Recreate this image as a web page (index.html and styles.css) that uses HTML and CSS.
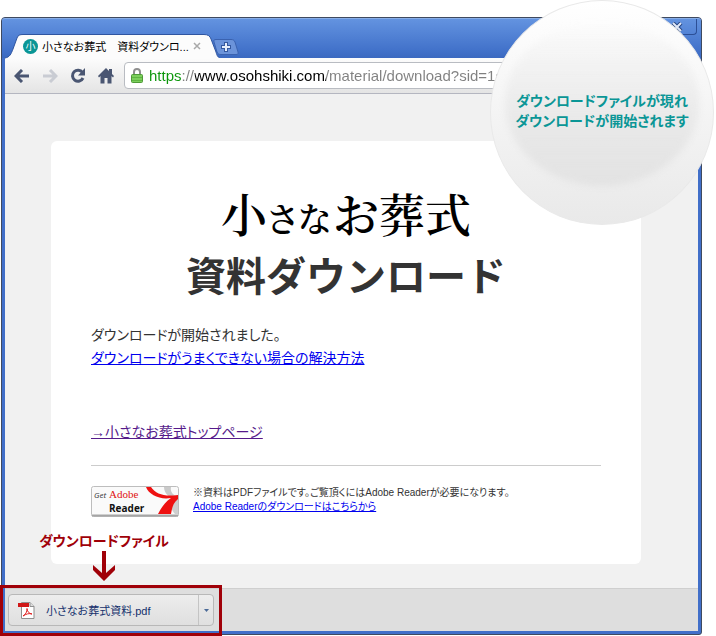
FILE: index.html
```
<!DOCTYPE html>
<html lang="ja">
<head>
    <meta charset="UTF-8">
    <meta name="viewport" content="width=device-width, initial-scale=1.0">
    <title>小さなお葬式 資料ダウンロード</title>
    <link rel="stylesheet" href="styles.css">
</head>
<body>
    <div class="window">
        <div class="titlebar">
            <div class="tab">
                <svg class="tab-bg" width="214" height="25" viewBox="0 0 214 25">
                    <path d="M0 25V24C5 23 6 20 8 15L12 4C13 1 15 .5 18 .5H199C203 .5 205 2 206 5L211 18C212 22 213 23 214 23.500V25Z" fill="#fcfcfc"/>
                    <path d="M0 24C5 23 6 20 8 15L12 4C13 1 15 .5 18 .5H199C203 .5 205 2 206 5L211 18C212 22 213 23 214 23.500" fill="none" stroke="#2f55a0"/>
                </svg>
                <span class="favicon">小</span>
                <span class="tab-title">小さなお葬式　資料ダウンロ...</span>
                <button class="tab-close" aria-label="タブを閉じる">
                    <svg width="8" height="8" viewBox="0 0 8 8"><path d="M1 1L7 7M7 1L1 7" stroke="#a9a9a9" stroke-width="1.500"/></svg>
                </button>
            </div>
            <button class="new-tab" aria-label="新しいタブ">
                <svg width="26" height="16" viewBox="0 0 26 16">
                    <path d="M3 .5H18C20 .5 21 1 22 3L25 13C25.500 15 25 15.500 23 15.500H8C6 15.500 5 15 4 13L1 3C.5 1 1 .5 3 .5Z" fill="#6b93da" stroke="#3a62b0"/>
                    <path d="M13 3V13M8 8H18" stroke="#34589f" stroke-width="4"/>
                    <path d="M13 4V12M9 8H17" stroke="#e6eefb" stroke-width="2"/>
                </svg>
            </button>
            <button class="win-close" aria-label="閉じる">
                <svg width="12" height="10" viewBox="0 0 12 10">
                    <path d="M2 1L10 9M10 1L2 9" stroke="#26447f" stroke-width="4"/>
                    <path d="M2 1L10 9M10 1L2 9" stroke="#dfe8f8" stroke-width="2"/>
                </svg>
            </button>
        </div>

        <div class="toolbar">
            <button aria-label="戻る">
                <svg width="16" height="14" viewBox="0 0 16 14"><path d="M8 1L2 7L8 13M2 7H15" fill="none" stroke="#4a5672" stroke-width="3"/></svg>
            </button>
            <button aria-label="進む">
                <svg width="16" height="14" viewBox="0 0 16 14"><path d="M8 1L14 7L8 13M14 7H1" fill="none" stroke="#c9ccd3" stroke-width="3"/></svg>
            </button>
            <button aria-label="再読み込み">
                <svg width="16" height="16" viewBox="0 0 16 16"><path d="M12.500 4.500A5.500 5.500 0 1 0 13 10" fill="none" stroke="#4a5672" stroke-width="3"/><path d="M15 0V7.500H8Z" fill="#4a5672"/></svg>
            </button>
            <button aria-label="ホーム">
                <svg width="16" height="16" viewBox="0 0 16 16"><path d="M8 0L11 3V1H14V6L16 8L15 9.500L13.500 8V15.500H9.500V10H6.500V15.500H2.500V8L1 9.500L0 8Z" fill="#4a5672"/></svg>
            </button>
            <div class="address">
                <svg width="12" height="15" viewBox="0 0 12 15">
                    <path d="M3 7V4A3 3 0 0 1 9 4V7" fill="none" stroke="#8f8f8f" stroke-width="2"/>
                    <rect x=".5" y="6.500" width="11" height="8" rx="1" fill="#7ccf5c" stroke="#4f9a38"/>
                    <path d="M1 9.500H11M1 12.500H11" stroke="#5fb542"/>
                </svg>
                <input type="text" aria-label="アドレス" value="https://www.osohshiki.com/material/download?sid=1do">
            </div>
        </div>

        <main class="page">
            <div class="card">
                <div class="logo">小<small>さな</small>お葬式</div>
                <h1>資料ダウンロード</h1>
                <p>ダウンロードが開始されました。<br><a href="#">ダウンロードがうまくできない場合の解決方法</a></p>
                <p class="top-link"><a class="visited" href="#">→小さなお葬式トップページ</a></p>
                <div class="reader">
                    <a class="badge" href="#" aria-label="Get Adobe Reader">
                        <svg width="88" height="31" viewBox="0 0 88 31">
                            <rect x=".5" y=".5" width="87" height="30" rx="2" fill="#fafafa" stroke="#bdbdbd"/>
                            <path d="M1 29.500H87" stroke="#a5a5a5" stroke-width="2"/>
                            <path d="M73 1H80C79 6 82 9 87 11V14C79 12 73 8 73 1Z" fill="#c9c9c9"/>
                            <path d="M80 18L87 12V28H84C81 25 80 22 80 18Z" fill="#cfcfcf"/>
                            <path d="M55 1H60C65 8 73 11 87 9V13C82 17 81 22 80 28H67C70 22 74 16 80 12C69 14 58 9 55 1Z" fill="#ee1111"/>
                            <text x="3" y="12" class="b-get">Get</text>
                            <text x="18" y="12" class="b-adobe">Adobe</text>
                            <text x="18" y="26" class="b-reader">Reader</text>
                        </svg>
                    </a>
                    <p>※資料はPDFファイルです。ご覧頂くにはAdobe Readerが必要になります。<br><a href="#">Adobe Readerのダウンロードはこちらから</a></p>
                </div>
            </div>
        </main>

        <div class="downloads">
            <div class="item">
                <button class="file">
                    <svg width="17" height="17" viewBox="0 0 17 17">
                        <path d="M3.500 .5H12L16 4.500V16.500H3.500Z" fill="#fff" stroke="#8f8f8f"/>
                        <path d="M12 .5V4.500H16" fill="#ddd" stroke="#8f8f8f"/>
                        <path d="M0 1H11V5H0Z" fill="#d01818"/>
                        <path d="M5 14C8 12 9 10 9 6.500C9.500 10 11 11.500 14 12C11 11 8 12 5 14Z" fill="none" stroke="#e02020"/>
                    </svg>
                    小さなお葬式資料.pdf
                </button>
                <button class="more" aria-label="メニュー">
                    <svg width="5" height="3" viewBox="0 0 5 3"><path d="M0 0H5L2.500 3Z" fill="#4a6a98"/></svg>
                </button>
            </div>
            <div class="marker"></div>
            <div class="note">
                ダウンロードファイル
                <svg width="22" height="30" viewBox="0 0 22 30"><path d="M9 0H13V22L22 14V19L11 30L0 19V14L9 22Z" fill="#a00008"/></svg>
            </div>
        </div>
    </div>

    <div class="bubble">
        <p>ダウンロードファイルが現れ<br>ダウンロードが開始されます</p>
    </div>
</body>
</html>
```
FILE: styles.css
```
* {
    box-sizing: border-box;
}

body {
    margin: 0;
    padding: 17px 14px 1px 1px;
    min-height: 100vh;
    display: flex;
    position: relative;
    background: #fff;
    color: #333;
    font-family: "Liberation Sans", "Noto Sans CJK JP", sans-serif;
    font-feature-settings: "palt";
}

p {
    margin: 0;
}

button {
    display: flex;
    align-items: center;
    margin: 0;
    padding: 0;
    border: none;
    background: none;
    font: inherit;
    font-feature-settings: inherit;
    cursor: pointer;
}

svg {
    display: block;
    flex-shrink: 0;
}

a {
    color: #0000ee;
}

a.visited {
    color: #551a8b;
}

.window {
    flex: 1;
    display: flex;
    flex-direction: column;
    border: 1px solid #3f4a60;
    border-radius: 4px 4px 3px 3px;
    padding: 0 3px 3px;
    background: #416fc9;
}

/* title bar and tabs */
.titlebar {
    display: flex;
    align-items: flex-end;
    height: 40px;
    margin: 0 -3px;
    padding-left: 3px;
    border-top: 1px solid #88aee8;
    border-radius: 3px 3px 0 0;
    background: linear-gradient(#6393e0, #4272ca 80%, #3b69c0);
}

.tab {
    position: relative;
    display: flex;
    align-items: center;
    width: 210px;
    height: 24px;
    padding: 0 14px 0 18px;
}

.tab-bg {
    position: absolute;
    left: 0;
    top: 0;
}

.favicon {
    position: relative;
    flex-shrink: 0;
    width: 15px;
    height: 15px;
    margin-right: 4px;
    border-radius: 50%;
    background: #0a9696;
    color: #fff;
    font-size: 10px;
    line-height: 15px;
    text-align: center;
}

.tab-title {
    position: relative;
    flex: 1;
    color: #000;
    font-size: 11px;
    white-space: nowrap;
}

.tab-close {
    position: relative;
}

.new-tab {
    align-self: center;
    margin: 16px 0 0 -2px;
}

.win-close {
    align-self: flex-start;
    justify-content: center;
    width: 40px;
    height: 16px;
    margin: 0 4px 0 auto;
    border: 1px solid #2c4f96;
    border-top: none;
    border-radius: 0 0 4px 4px;
}

/* toolbar */
.toolbar {
    display: flex;
    align-items: center;
    gap: 12px;
    height: 36px;
    padding: 0 4px 0 9px;
    border-bottom: 1px solid #b4b6c0;
    background: linear-gradient(#fcfcfc, #e4e4e4);
}

.address {
    flex: 1;
    display: flex;
    align-items: center;
    gap: 6px;
    height: 27px;
    margin-left: -2px;
    padding-left: 6px;
    border: 1px solid #b9bcc2;
    border-radius: 4px;
    background: #fff;
}

/* scheme in green, host in black, the rest in grey */
.address input {
    flex: 1;
    min-width: 0;
    padding: 0;
    border: none;
    outline: none;
    background: linear-gradient(90deg, #0a960a 33px, #808080 33px, #808080 46px, #000 46px, #000 177px, #808080 177px);
    -webkit-background-clip: text;
    background-clip: text;
    color: transparent;
    font-family: "Liberation Sans", sans-serif;
    font-size: 15px;
}

/* page */
.page {
    flex: 1;
    padding: 47px 57px 24px 46px;
    background: #f1f1f1;
}

.card {
    padding: 41px 40px 47px;
    border-radius: 6px;
    background: #fff;
    font-size: 14px;
    line-height: 23px;
}

.logo {
    height: 60px;
    color: #000;
    font-family: "Noto Serif CJK JP", "Noto Sans CJK JP", serif;
    font-size: 46px;
    font-weight: 600;
    line-height: 60px;
    text-align: center;
}

.logo small {
    font-size: 34px;
    line-height: 1;
}

h1 {
    margin: 5px 0 17px;
    font-size: 40px;
    line-height: 60px;
    text-align: center;
    font-feature-settings: normal;
}

.top-link {
    margin: 51px 0 21px;
}

.reader {
    display: flex;
    gap: 14px;
    padding-top: 20px;
    border-top: 1px solid #ccc;
    font-size: 10px;
    line-height: 14px;
}

.b-get {
    font: italic 8px "Open Sans", sans-serif;
    fill: #333;
}

.b-adobe {
    font: 11px "Liberation Serif", serif;
    fill: #e01010;
}

.b-reader {
    font: bold 10px "Open Sans", sans-serif;
    fill: #111;
}

/* download shelf */
.downloads {
    position: relative;
    display: flex;
    align-items: center;
    height: 43px;
    padding-left: 3px;
    border-top: 1px solid #cfcfcf;
    background: #dedede;
}

.item {
    display: flex;
    width: 206px;
    height: 32px;
    border: 1px solid #b8b8b8;
    border-radius: 4px;
    background: linear-gradient(#ededed, #dfdfdf);
}

.file {
    flex: 1;
    gap: 11px;
    padding-left: 9px;
    color: #14306c;
    font-size: 11px;
}

.more {
    justify-content: center;
    width: 15px;
    border-left: 1px solid #c4c4c4;
}

.marker {
    position: absolute;
    left: -5px;
    top: -4px;
    width: 222px;
    height: 51px;
    border: 3px solid #a00008;
}

.note {
    position: absolute;
    left: 34px;
    bottom: 50px;
    display: flex;
    flex-direction: column;
    align-items: center;
    color: #a00008;
    font-size: 14px;
    font-weight: bold;
    line-height: 20px;
}

/* round callout */
.bubble {
    position: absolute;
    top: 0;
    right: 2px;
    width: 224px;
    height: 225px;
    display: flex;
    align-items: center;
    justify-content: center;
    padding-bottom: 4px;
    border: 1px solid #e9e9e9;
    border-radius: 50%;
    background: linear-gradient(#fff, #e9e9e9);
    color: #0a9696;
    font-size: 14px;
    font-weight: bold;
    line-height: 20px;
    text-align: center;
}

/* soft shade inside the callout, stronger towards the bottom */
.bubble::before {
    content: "";
    position: absolute;
    inset: 20px 14px 38px;
    border-radius: 50%;
    background: linear-gradient(rgba(226, 226, 226, 0), #e3e3e3);
    filter: blur(3px);
}

.bubble p {
    position: relative;
}
```
